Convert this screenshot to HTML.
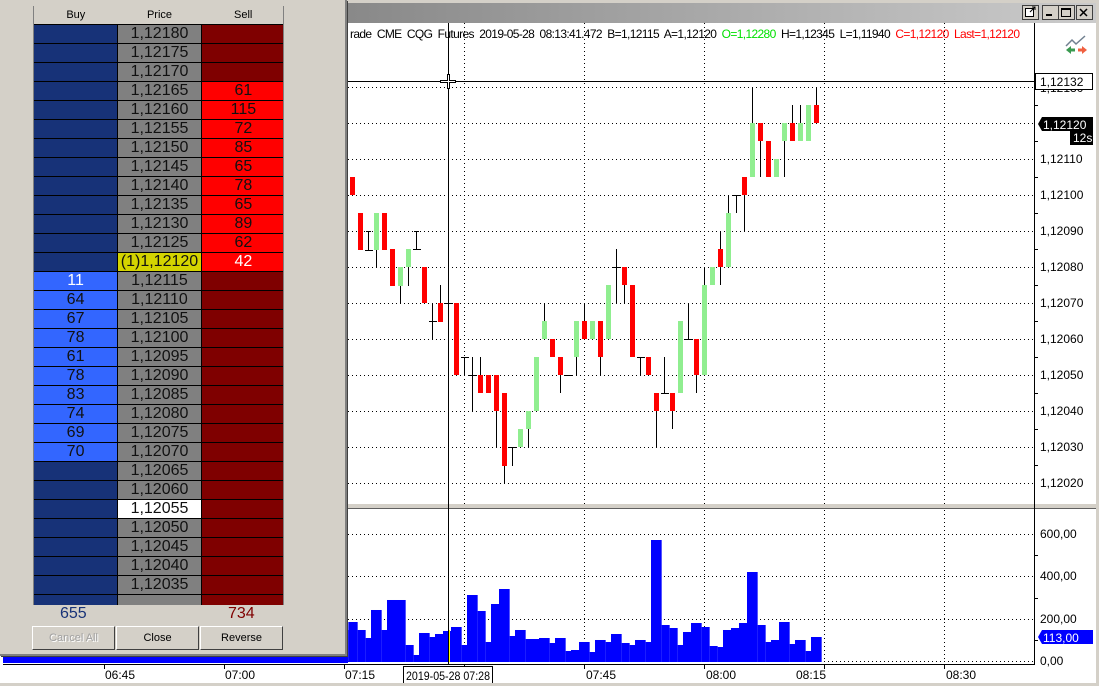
<!DOCTYPE html>
<html><head><meta charset="utf-8">
<style>
*{margin:0;padding:0;box-sizing:border-box}
html,body{width:1099px;height:686px;overflow:hidden;background:#d4d0c8;font-family:"Liberation Sans",sans-serif}
#svg{position:absolute;left:0;top:0}
#panel{position:absolute;left:0;top:0;width:347px;height:656px;background:#d4d0c8;border-right:2px solid #808080;border-bottom:2px solid #808080;box-shadow:1px 1px 0 #404040}
#tbl{position:absolute;left:33px;top:6px;width:251px;height:599px;overflow:hidden;border-left:1px solid #808080;border-right:1px solid #808080}
table{border-collapse:collapse;width:251px;table-layout:fixed}
td{height:19px;border-bottom:1px solid #000;text-align:center;font-size:16px;line-height:18px;padding:0;color:#111}
td.p{border-left:1px solid #000;border-right:1px solid #000;background:#808080}
th{height:18px;font-weight:normal;font-size:11px;color:#000;background:#d4d0c8;border-bottom:1px solid #000}
.b{background:#173278}.bl{background:#3366ff}.s{background:#7f0000}.r{background:#ff0000}
.y{background:#d4d400!important}.w{background:#fff!important}.wt{color:#fff}
.tot{position:absolute;top:605px;font-size:16px}
.btn{position:absolute;top:626px;height:24px;width:83px;background:#d4d0c8;border:1px solid;border-color:#fff #404040 #404040 #fff;font-size:11px;text-align:center;line-height:22px;color:#000}
</style></head><body>
<svg id="svg" width="1099" height="686" xmlns="http://www.w3.org/2000/svg" font-family="Liberation Sans, sans-serif">
<defs><linearGradient id="tb" x1="0" x2="1"><stop offset="0" stop-color="#888"/><stop offset="1" stop-color="#cbcbcb"/></linearGradient></defs>
<rect x="0" y="0" width="1099" height="686" fill="#d4d0c8"/>
<rect x="340" y="3" width="756" height="20" fill="url(#tb)"/>
<rect x="0" y="23" width="1096" height="660" fill="#fff"/>
<rect x="1096" y="0" width="3" height="686" fill="#d4d0c8"/>
<text x="350" y="38" font-size="12" style="white-space:pre" textLength="670" lengthAdjust="spacing">rade  CME  CQG  Futures  2019-05-28  08:13:41.472  B=1,12115  A=1,12120  <tspan fill="#00e000">O=1,12280</tspan>  H=1,12345  L=1,11940  <tspan fill="#f00">C=1,12120</tspan>  <tspan fill="#f00">Last=1,12120</tspan></text>
<g stroke="#000" stroke-width="1" stroke-dasharray="1,3">
<path d="M348 87.5H1033M348 123.5H1033M348 159.5H1033M348 195.5H1033M348 231.5H1033M348 267.5H1033M348 303.5H1033M348 339.5H1033M348 375.5H1033M348 411.5H1033M348 447.5H1033M348 483.5H1033"/>
<path d="M464.5 23V505M584.5 23V505M704.5 23V505M824.5 23V505M944.5 23V505"/>
<path d="M464.5 510V662M584.5 510V662M704.5 510V662M824.5 510V662M944.5 510V662"/>
<path d="M348 534.5H1033M348 576.5H1033M348 619.5H1033M348 661.5H1033"/>
</g>
<rect x="348" y="504" width="748" height="5" fill="#d4d0c8"/>
<path d="M348 508.5H1096" stroke="#606060"/>
<path d="M1034.5 23V665" stroke="#000"/>
<g stroke="#000"><path d="M1034 105.5h4M1034 141.5h4M1034 177.5h4M1034 213.5h4M1034 249.5h4M1034 285.5h4M1034 321.5h4M1034 357.5h4M1034 393.5h4M1034 429.5h4M1034 465.5h4M1034 555.5h4M1034 598.5h4M1034 640.5h4"/></g>
<g id="c">
<g stroke="#000" fill="none">
<path d="M368.5 231V250M366 231.5h5M376.5 250V267M400.5 286V303M408.5 267V286M416.5 231V249M414 231.5h5M432.5 303V339M440.5 285V303M464.5 357V375M472.5 357V411M480.5 357V375M496.5 411V447M504.5 466V483M512.5 447V466M528.5 429V447M544.5 303V321M560.5 375V393M576.5 357V375M584.5 303V321M600.5 357V375M616.5 249V303M624.5 285V303M640.5 357V375M656.5 411V447M664.5 357V393M672.5 411V429M688.5 303V339M696.5 375V393M704.5 267V285M720.5 231V285M728.5 195V213M736.5 195V213M744.5 195V231M752.5 87V123M760.5 141V177M784.5 141V177M792.5 105V123M800.5 105V123M816.5 87V105"/>
<path d="M365 250.5h8M413 249.5h8M429 321.5h8M445 303.5h8M461 357.5h8M469 375.5h8M509 447.5h8M565 375.5h8M613 267.5h8M637 357.5h8M661 393.5h8M685 339.5h8M733 195.5h8"/>
</g>
<g fill="#ff0000">
<rect x="350" y="177" width="5" height="18"/><rect x="358" y="213" width="5" height="37"/><rect x="382" y="213" width="5" height="37"/><rect x="390" y="249" width="5" height="37"/><rect x="422" y="267" width="5" height="36"/><rect x="438" y="303" width="5" height="19"/><rect x="454" y="303" width="5" height="72"/><rect x="478" y="375" width="5" height="18"/><rect x="486" y="375" width="5" height="18"/><rect x="494" y="375" width="5" height="36"/><rect x="502" y="393" width="5" height="73"/><rect x="550" y="339" width="5" height="18"/><rect x="558" y="357" width="5" height="18"/><rect x="582" y="321" width="5" height="18"/><rect x="598" y="321" width="5" height="36"/><rect x="622" y="267" width="5" height="18"/><rect x="630" y="285" width="5" height="72"/><rect x="646" y="357" width="5" height="18"/><rect x="654" y="393" width="5" height="18"/><rect x="670" y="393" width="5" height="18"/><rect x="694" y="339" width="5" height="36"/><rect x="718" y="249" width="5" height="18"/><rect x="742" y="177" width="5" height="18"/><rect x="758" y="123" width="5" height="18"/><rect x="766" y="141" width="5" height="36"/><rect x="790" y="123" width="5" height="18"/><rect x="814" y="105" width="5" height="18"/>
</g>
<g fill="#90ee90">
<rect x="374" y="213" width="5" height="37"/><rect x="398" y="267" width="5" height="19"/><rect x="406" y="249" width="5" height="18"/><rect x="518" y="429" width="5" height="18"/><rect x="526" y="411" width="5" height="18"/><rect x="534" y="357" width="5" height="54"/><rect x="542" y="321" width="5" height="18"/><rect x="574" y="321" width="5" height="36"/><rect x="590" y="321" width="5" height="18"/><rect x="606" y="285" width="5" height="54"/><rect x="678" y="321" width="5" height="72"/><rect x="702" y="285" width="5" height="90"/><rect x="710" y="267" width="5" height="18"/><rect x="726" y="213" width="5" height="54"/><rect x="750" y="123" width="5" height="54"/><rect x="774" y="159" width="5" height="18"/><rect x="782" y="123" width="5" height="18"/><rect x="798" y="123" width="5" height="18"/><rect x="806" y="105" width="5" height="36"/>
</g>
</g>
<g transform="translate(345,500) scale(0.33333)" fill="#0000ff">
<rect x="-30" y="390" width="40" height="96"/>
<rect x="10" y="366" width="28" height="120"/><rect x="38" y="390" width="24" height="96"/><rect x="62" y="414" width="16" height="72"/><rect x="78" y="330" width="32" height="156"/><rect x="110" y="390" width="16" height="96"/><rect x="126" y="300" width="56" height="186"/><rect x="182" y="435" width="24" height="51"/><rect x="206" y="465" width="16" height="21"/><rect x="222" y="399" width="32" height="87"/><rect x="254" y="411" width="16" height="75"/><rect x="270" y="402" width="24" height="84"/><rect x="294" y="393" width="24" height="93"/><rect x="318" y="381" width="32" height="105"/><rect x="350" y="435" width="16" height="51"/><rect x="366" y="285" width="32" height="201"/><rect x="398" y="333" width="24" height="153"/><rect x="422" y="426" width="16" height="60"/><rect x="438" y="312" width="24" height="174"/><rect x="462" y="267" width="32" height="219"/><rect x="494" y="408" width="16" height="78"/><rect x="510" y="390" width="32" height="96"/><rect x="542" y="417" width="40" height="69"/><rect x="582" y="414" width="32" height="72"/><rect x="614" y="429" width="16" height="57"/><rect x="630" y="414" width="32" height="72"/><rect x="662" y="453" width="16" height="33"/><rect x="678" y="450" width="24" height="36"/><rect x="702" y="426" width="32" height="60"/><rect x="734" y="456" width="16" height="30"/><rect x="750" y="420" width="32" height="66"/><rect x="782" y="426" width="16" height="60"/><rect x="798" y="402" width="32" height="84"/><rect x="830" y="429" width="24" height="57"/><rect x="854" y="435" width="16" height="51"/><rect x="870" y="420" width="32" height="66"/><rect x="902" y="426" width="16" height="60"/><rect x="918" y="120" width="32" height="366"/><rect x="950" y="375" width="24" height="111"/><rect x="974" y="384" width="24" height="102"/><rect x="998" y="435" width="16" height="51"/><rect x="1014" y="396" width="24" height="90"/><rect x="1038" y="369" width="32" height="117"/><rect x="1070" y="381" width="24" height="105"/><rect x="1094" y="438" width="24" height="48"/><rect x="1118" y="441" width="16" height="45"/><rect x="1134" y="390" width="24" height="96"/><rect x="1158" y="384" width="24" height="102"/><rect x="1182" y="369" width="24" height="117"/><rect x="1206" y="216" width="32" height="270"/><rect x="1238" y="375" width="24" height="111"/><rect x="1262" y="426" width="16" height="60"/><rect x="1278" y="420" width="24" height="66"/><rect x="1302" y="366" width="32" height="120"/><rect x="1334" y="432" width="16" height="54"/><rect x="1350" y="420" width="32" height="66"/><rect x="1382" y="453" width="16" height="33"/><rect x="1398" y="411" width="32" height="75"/>
</g>
<rect x="3" y="655" width="345" height="8" fill="#0000ff"/>
<path d="M449.5 630V662" stroke="#ffff00"/>
<path d="M3 664.5H1034" stroke="#000"/>
<g stroke="#000"><path d="M104.5 664v5M224.5 664v5M344.5 664v5M464.5 664v5M584.5 664v5M704.5 664v5M824.5 664v5M944.5 664v5"/></g>
<g font-size="12" fill="#000">
<text x="105" y="679">06:45</text><text x="225" y="679">07:00</text><text x="345" y="679">07:15</text><text x="586" y="679">07:45</text><text x="706" y="679">08:00</text><text x="796" y="679">08:15</text><text x="946" y="679">08:30</text>
</g>
<rect x="403.5" y="666.5" width="89" height="17" fill="#fff" stroke="#000"/>
<text x="406" y="680" font-size="12" textLength="84" lengthAdjust="spacingAndGlyphs">2019-05-28 07:28</text>
<rect x="0" y="683" width="1099" height="3" fill="#d4d0c8"/>
<path d="M348 81.5H1034M448.5 23V665" stroke="#000"/>
<path d="M440 81.5h16M448.5 74v15" stroke="#000" stroke-width="3"/>
<path d="M441 81.5h14M448.5 75v13" stroke="#fff" stroke-width="1"/>
<g font-size="12" fill="#000">
<text x="1040" y="199">1,12100</text><text x="1040" y="163">1,12110</text><text x="1040" y="235">1,12090</text><text x="1040" y="271">1,12080</text><text x="1040" y="307">1,12070</text><text x="1040" y="343">1,12060</text><text x="1040" y="379">1,12050</text><text x="1040" y="415">1,12040</text><text x="1040" y="451">1,12030</text><text x="1040" y="487">1,12020</text><text x="1040" y="92">1,12130</text>
<text x="1040" y="538">600,00</text><text x="1040" y="580">400,00</text><text x="1040" y="623">200,00</text><text x="1040" y="665">0,00</text>
</g>
<rect x="1035.5" y="73.5" width="57" height="16" fill="#fff" stroke="#000"/>
<text x="1040" y="86" font-size="12">1,12132</text>
<path d="M1038 124l4-7h51v14h-51z" fill="#000"/>
<text x="1043" y="129" font-size="12" fill="#fff">1,12120</text>
<rect x="1070" y="131" width="23" height="14" fill="#000"/>
<text x="1073" y="142" font-size="12" fill="#fff">12s</text>
<path d="M1038 637l4-7h51v14h-51z" fill="#0000ff"/>
<text x="1043" y="642" font-size="12" fill="#fff">113,00</text>
<path d="M1066 46l6-6 4 4 9-8" stroke="#708090" stroke-width="1.5" fill="none"/>
<path d="M1066 50l5-4v2.5h4v3h-4v2.5z" fill="#3a9a50"/>
<path d="M1087 50l-5-4v2.5h-4v3h4v2.5z" fill="#f06040"/>
<g>
<rect x="1022.5" y="5.5" width="16" height="14" fill="#d4d0c8" stroke="#404040"/>
<rect x="1025.5" y="8.5" width="8" height="8" fill="#fff" stroke="#000"/>
<path d="M1030 12l5-5M1032 7h3v3" stroke="#000" fill="none"/>
<rect x="1042.5" y="5.5" width="16" height="14" fill="#d4d0c8" stroke="#404040"/>
<rect x="1046" y="14" width="6" height="2" fill="#000"/>
<rect x="1058.5" y="5.5" width="16" height="14" fill="#d4d0c8" stroke="#404040"/>
<rect x="1061.5" y="8.5" width="9" height="8" fill="none" stroke="#000"/><path d="M1061 9.5h10" stroke="#000"/>
<rect x="1076.5" y="5.5" width="16" height="14" fill="#d4d0c8" stroke="#404040"/>
<path d="M1080 9l7 7M1087 9l-7 7" stroke="#000" stroke-width="1.5"/>
</g>
</svg>

<div id="panel">
<div id="tbl"><table>
<tr><th>Buy</th><th>Price</th><th>Sell</th></tr>
<tr><td class="b"></td><td class="p">1,12180</td><td class="s"></td></tr>
<tr><td class="b"></td><td class="p">1,12175</td><td class="s"></td></tr>
<tr><td class="b"></td><td class="p">1,12170</td><td class="s"></td></tr>
<tr><td class="b"></td><td class="p">1,12165</td><td class="r">61</td></tr>
<tr><td class="b"></td><td class="p">1,12160</td><td class="r">115</td></tr>
<tr><td class="b"></td><td class="p">1,12155</td><td class="r">72</td></tr>
<tr><td class="b"></td><td class="p">1,12150</td><td class="r">85</td></tr>
<tr><td class="b"></td><td class="p">1,12145</td><td class="r">65</td></tr>
<tr><td class="b"></td><td class="p">1,12140</td><td class="r">78</td></tr>
<tr><td class="b"></td><td class="p">1,12135</td><td class="r">65</td></tr>
<tr><td class="b"></td><td class="p">1,12130</td><td class="r">89</td></tr>
<tr><td class="b"></td><td class="p">1,12125</td><td class="r">62</td></tr>
<tr><td class="b"></td><td class="p y">(1)1,12120</td><td class="r wt">42</td></tr>
<tr><td class="bl wt">11</td><td class="p">1,12115</td><td class="s"></td></tr>
<tr><td class="bl">64</td><td class="p">1,12110</td><td class="s"></td></tr>
<tr><td class="bl">67</td><td class="p">1,12105</td><td class="s"></td></tr>
<tr><td class="bl">78</td><td class="p">1,12100</td><td class="s"></td></tr>
<tr><td class="bl">61</td><td class="p">1,12095</td><td class="s"></td></tr>
<tr><td class="bl">78</td><td class="p">1,12090</td><td class="s"></td></tr>
<tr><td class="bl">83</td><td class="p">1,12085</td><td class="s"></td></tr>
<tr><td class="bl">74</td><td class="p">1,12080</td><td class="s"></td></tr>
<tr><td class="bl">69</td><td class="p">1,12075</td><td class="s"></td></tr>
<tr><td class="bl">70</td><td class="p">1,12070</td><td class="s"></td></tr>
<tr><td class="b"></td><td class="p">1,12065</td><td class="s"></td></tr>
<tr><td class="b"></td><td class="p">1,12060</td><td class="s"></td></tr>
<tr><td class="b"></td><td class="p w">1,12055</td><td class="s"></td></tr>
<tr><td class="b"></td><td class="p">1,12050</td><td class="s"></td></tr>
<tr><td class="b"></td><td class="p">1,12045</td><td class="s"></td></tr>
<tr><td class="b"></td><td class="p">1,12040</td><td class="s"></td></tr>
<tr><td class="b"></td><td class="p">1,12035</td><td class="s"></td></tr>
<tr><td class="b"></td><td class="p"></td><td class="s"></td></tr>
</table></div>
<div class="tot" style="left:60px;color:#173278">655</div>
<div class="tot" style="left:228px;color:#7f0000">734</div>
<div class="btn" style="left:32px;color:#a0a0a0;text-shadow:1px 1px 0 #fff">Cancel All</div>
<div class="btn" style="left:116px">Close</div>
<div class="btn" style="left:200px">Reverse</div>
</div>
</body></html>
